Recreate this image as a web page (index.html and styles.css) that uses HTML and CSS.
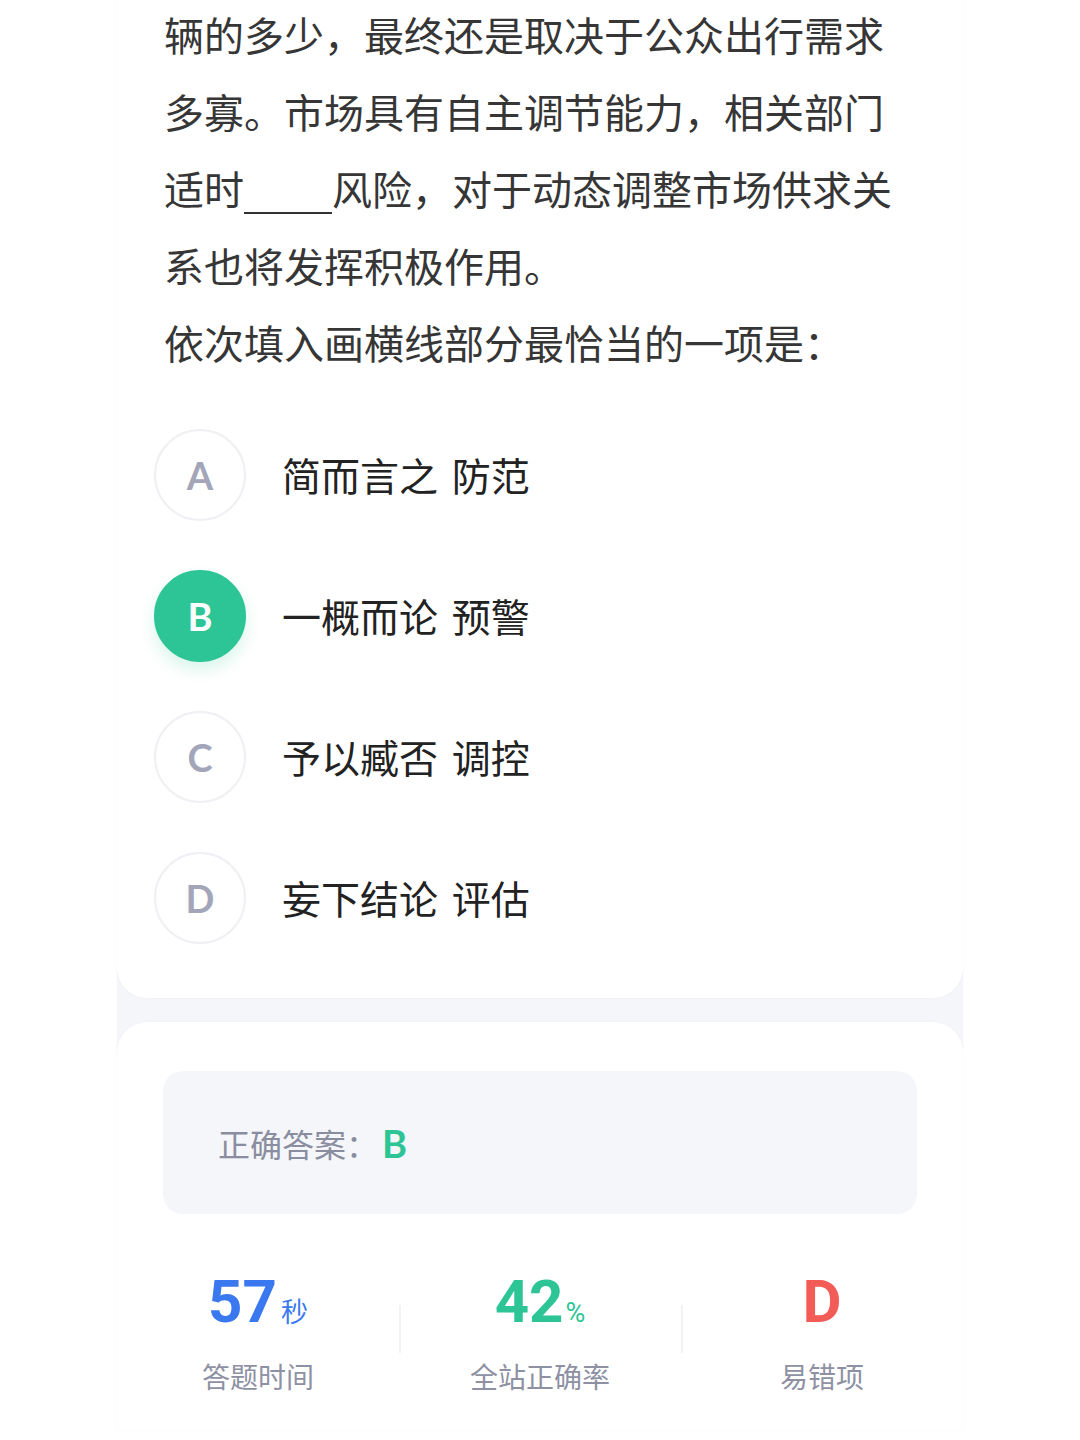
FILE: index.html
```html
<!DOCTYPE html>
<html lang="zh-CN">
<head>
<meta charset="utf-8">
<title>题目</title>
<link rel="stylesheet" href="styles.css">
</head>
<body>
<div class="wrap">
  <section class="card question-card">
    <p class="stem">辆的多少，最终还是取决于公众出行需求多寡。市场具有自主调节能力，相关部门适时<span class="blank"></span>风险，对于动态调整市场供求关系也将发挥积极作用。</p>
    <p class="stem">依次填入画横线部分最恰当的一项是：</p>
    <ul class="options">
      <li class="option"><span class="letter">A</span><span class="opt-text">简而言之 防范</span></li>
      <li class="option selected"><span class="letter">B</span><span class="opt-text">一概而论 预警</span></li>
      <li class="option"><span class="letter">C</span><span class="opt-text">予以臧否 调控</span></li>
      <li class="option"><span class="letter">D</span><span class="opt-text">妄下结论 评估</span></li>
    </ul>
  </section>
  <section class="card result-card">
    <div class="answer-box">
      <span class="answer-label">正确答案：</span><span class="answer-value">B</span>
    </div>
    <div class="stats">
      <div class="stat">
        <div class="stat-num blue">57<span class="unit">秒</span></div>
        <div class="stat-label">答题时间</div>
      </div>
      <div class="stat">
        <div class="stat-num green">42<span class="unit pct">%</span></div>
        <div class="stat-label">全站正确率</div>
      </div>
      <div class="stat">
        <div class="stat-num red">D</div>
        <div class="stat-label">易错项</div>
      </div>
    </div>
  </section>
</div>
</body>
</html>
```
FILE: styles.css
```css
* { box-sizing: border-box; }
html, body {
  margin: 0;
  padding: 0;
  background: #ffffff;
  font-family: "Noto Sans CJK SC", "Noto Sans", sans-serif;
}
body { overflow: hidden; height: 1440px; }

.wrap {
  width: 846px;
  margin: 0 auto;
  background: #f5f6f9;
}

.card {
  background: #ffffff;
  box-shadow: 0 0 2px rgba(120, 130, 150, 0.10);
}

.question-card {
  border-radius: 0 0 30px 30px;
  padding: 0 47px 30px 47px;
}

.stem {
  margin: 0;
  font-size: 40px;
  line-height: 77px;
  color: #363636;
}
.stem:first-child { margin-top: -4px; }

.blank {
  display: inline-block;
  width: 88px;
  height: 0;
  border-bottom: 2px solid #333;
  vertical-align: -9px;
}

.options {
  list-style: none;
  margin: 23px 0 0 -10px;
  padding: 0;
}

.option {
  height: 141px;
  display: flex;
  align-items: center;
  gap: 36px;
}

.letter {
  width: 92px;
  height: 92px;
  border-radius: 50%;
  border: 2px solid #eef0f3;
  display: flex;
  align-items: center;
  justify-content: center;
  font-family: Lato, "Noto Sans", sans-serif;
  font-weight: 700;
  font-size: 38px;
  color: #a3a6b9;
  flex: none;
}

.option.selected .letter {
  background: #2dc596;
  border-color: #2dc596;
  color: #ffffff;
  box-shadow: 0 8px 16px rgba(45, 197, 150, 0.18);
}

.opt-text {
  font-size: 39px;
  word-spacing: 5px;
  color: #222222;
  line-height: 1;
}

.result-card {
  margin-top: 24px;
  border-radius: 30px 30px 0 0;
  padding: 49px 46px 34px 46px;
}

.answer-box {
  height: 143px;
  background: #f4f6f9;
  border-radius: 20px;
  display: flex;
  align-items: center;
  padding-left: 55px;
}

.answer-label {
  font-size: 32px;
  color: #8a8d9f;
}

.answer-value {
  font-family: Lato, "Noto Sans", sans-serif;
  font-weight: 700;
  font-size: 38px;
  color: #2dc596;
  margin-left: 4px;
}

.stats {
  display: grid;
  grid-template-columns: 1fr 1fr 1fr;
  margin: 53px -46px 0 -46px;
}

.stat {
  display: flex;
  flex-direction: column;
  align-items: center;
  position: relative;
}
.stat + .stat::before {
  content: "";
  position: absolute;
  left: 0;
  top: 38px;
  width: 2px;
  height: 48px;
  background: #f2f3f6;
}

.stat-num {
  font-family: Roboto, "Noto Sans", sans-serif;
  font-weight: 700;
  font-size: 60px;
  line-height: 70px;
  height: 70px;
}
.stat-num.blue { color: #3a78ef; }
.stat-num.green { color: #2dc596; }
.stat-num.red { color: #f35b57; }

.unit {
  font-family: "Noto Sans CJK SC", sans-serif;
  font-weight: 400;
  font-size: 27px;
  margin-left: 4px;
}
.unit.pct {
  font-family: Roboto, sans-serif;
  font-size: 27px;
  margin-left: 2px;
}

.stat-label {
  margin-top: 19px;
  font-size: 28px;
  line-height: 40px;
  color: #8e91a3;
}
```
